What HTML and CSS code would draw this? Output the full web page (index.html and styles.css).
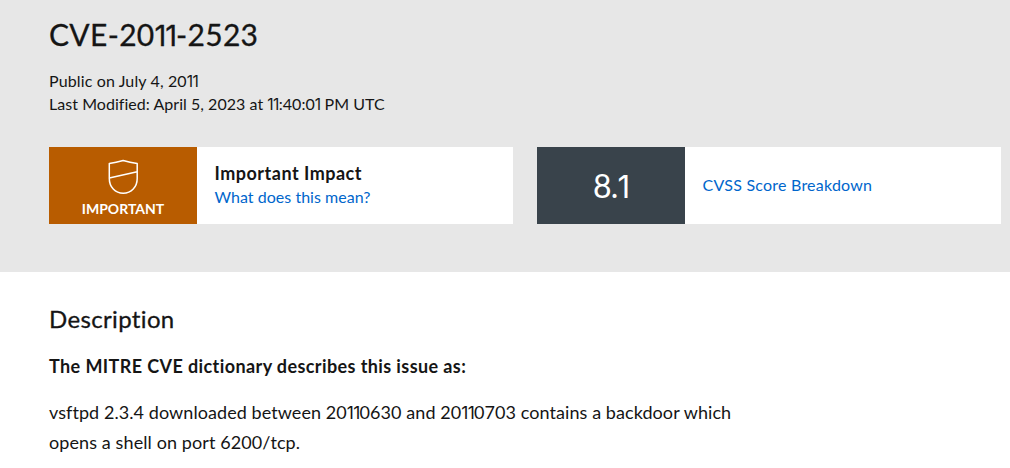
FILE: index.html
```html
<!DOCTYPE html>
<html lang="en">
<head>
<meta charset="utf-8">
<title>CVE-2011-2523</title>
<link rel="stylesheet" href="styles.css">
</head>
<body>
<header class="hero">
  <h1 class="title">CVE-20<span class="ones">11</span>-2523</h1>
  <div class="meta">
    <p class="published">Public on July 4, 20<span class="ones">11</span></p>
    <p class="modified">Last Modified: April 5, 2023 at <span class="ones">11</span>:40:0<span class="ones">1</span> PM UTC</p>
  </div>
  <div class="cards">
    <section class="card">
      <div class="badge badge-important">
        <svg class="shield" viewBox="0 0 32 36" width="32" height="36"><path d="M2.300 4.500Q9 3.500 16.200 1.500Q23 3.500 30.200 4.500V19.500C30.200 28 24.300 34.300 16.200 34.300C8.200 34.300 2.300 28 2.300 19.500ZM2.300 19L30.200 12.800"/></svg>
        <span class="severity">IMPORTANT</span>
      </div>
      <div class="card-body">
        <h2 class="impact">Important Impact</h2>
        <a class="link help">What does this mean?</a>
      </div>
    </section>
    <section class="card">
      <div class="badge badge-score"><span class="score">8.<span class="ones">1</span></span></div>
      <div class="card-body"><a class="link cvss">CVSS Score Breakdown</a></div>
    </section>
  </div>
</header>
<main class="content">
  <h2 class="heading">Description</h2>
  <h3 class="source">The MITRE CVE dictionary describes this issue as:</h3>
  <p class="description"><span class="line-one">vsftpd 2.3.4 downloaded between 20<span class="ones">11</span>0630 and 20<span class="ones">11</span>0703 contains a backdoor which</span><br><span class="line-two">opens a shell on port 6200/tcp.</span></p>
</main>
</body>
</html>
```
FILE: styles.css
```css
* { box-sizing: border-box; }
body { margin: 0; background: #fff; color: #151515; font-family: Lato, "Open Sans", sans-serif; font-variant-ligatures: none; overflow: hidden; }
h1, h2, h3, p { margin: 0; font-weight: 400; white-space: nowrap; }
.hero { height: 272px; padding: 13px 9px 0 49px; background: #e7e7e7; }
.title { font-size: 30px; line-height: 42px; letter-spacing: .33px; -webkit-text-stroke: .3px #151515; }
/* Narrow, footless numeral one */
.ones { font-family: Inter, sans-serif; font-size: .97em; line-height: 0; letter-spacing: -.04em; }
.meta { padding-top: 14px; font-size: 16px; line-height: 23px; }
.published { letter-spacing: .13px; }
.modified { letter-spacing: .04px; }
.cards { display: grid; grid-template-columns: 464px 464px; gap: 24px; margin-top: 32px; }
.card { display: flex; height: 77px; background: #fff; }
.badge { width: 148px; display: flex; align-items: center; justify-content: center; color: #fff; }
.badge-important { flex-direction: column; justify-content: flex-start; padding-top: 12px; background: #b85c00; }
.badge-score { padding-bottom: 1px; background: #39434b; }
.shield { fill: none; stroke: #fff; stroke-width: 1.5; stroke-linejoin: round; }
.severity { margin-top: 6px; font-size: 14px; font-weight: 700; line-height: 16px; }
.score { font-size: 32px; letter-spacing: -.8px; }
.card-body { display: flex; flex-direction: column; justify-content: center; align-items: flex-start; padding: 0 0 2px 17.500px; }
.impact { font-size: 18px; line-height: 24px; font-weight: 700; letter-spacing: .5px; }
.link { font-size: 16px; line-height: 24px; color: #06c; }
.help { letter-spacing: .03px; }
.cvss { letter-spacing: .23px; }
.content { padding: 31px 49px 0; }
.heading { font-size: 24px; line-height: 32px; letter-spacing: .35px; -webkit-text-stroke: .3px #151515; }
.source { margin-top: 18px; font-size: 18px; line-height: 27px; font-weight: 700; letter-spacing: .4px; }
.description { margin-top: 17px; font-size: 18px; line-height: 30px; }
.line-one { letter-spacing: .07px; }
.line-two { letter-spacing: .1px; }
```
